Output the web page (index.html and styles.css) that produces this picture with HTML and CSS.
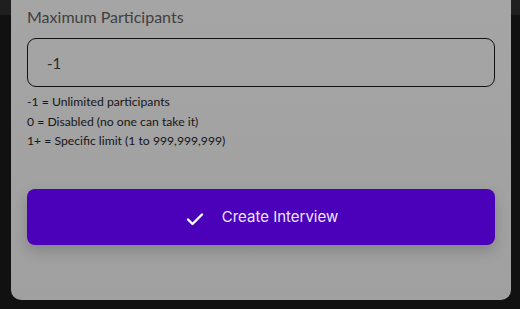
FILE: index.html
```html
<!DOCTYPE html>
<html lang="en">
<head>
  <meta charset="UTF-8" />
  <meta name="viewport" content="width=device-width, initial-scale=1.0" />
  <title>Create Interview</title>
  <link rel="stylesheet" href="styles.css">
</head>
<body>

  <div class="modal">
    <!-- Participants limit -->
    <div class="field">
      <label for="maxParticipants">Maximum Participants</label>
      <input type="text" id="maxParticipants" value="-1">
      <div class="hint">
        <p>-1 = Unlimited participants</p>
        <p>0 = Disabled (no one can take it)</p>
        <p>1+ = Specific limit (1 to 999,999,999)</p>
      </div>
    </div>

    <button type="submit" class="btn-create">
      <svg width="18" height="14" viewBox="0 0 18 14">
        <path d="M2 7.5 L6.5 12 L16 2.5" fill="none" stroke="#fff" stroke-width="2.4" stroke-linecap="round" stroke-linejoin="round"/>
      </svg>
      <span>Create Interview</span>
    </button>
  </div>

</body>
</html>
```

FILE: styles.css
```css
* {
  box-sizing: border-box;
}

body {
  margin: 0;
  padding: 0 9px 0 11px;
  height: 309px;
  overflow: hidden;
  font-family: 'Lato', sans-serif;
  background: linear-gradient(to bottom, #1f1f1f 0, #1f1f1f 15px, #111 15px);
}

.modal {
  background: linear-gradient(to bottom, #a5a5a5, #a0a0a0);
  border-radius: 0 0 10px 10px;
  padding: 6px 16px 55px;
}

.field label {
  display: block;
  font-size: 16px;
  line-height: 22px;
  color: #404040;
  margin-bottom: 10px;
}

.field input {
  width: 100%;
  height: 49px;
  padding: 0 19px;
  border: 1px solid #121212;
  border-radius: 9px;
  background: transparent;
  font-family: inherit;
  font-size: 15px;
  color: #2a2a2a;
  outline: none;
}

.hint {
  margin-top: 5px;
}

.hint p {
  margin: 0;
  font-size: 12.2px;
  line-height: 19.5px;
  color: #161616;
}

.btn-create {
  display: flex;
  align-items: center;
  justify-content: center;
  gap: 18px;
  width: 100%;
  height: 56px;
  margin-top: 38px;
  padding-left: 8px;
  border: none;
  border-radius: 8px;
  background-color: #4b00b9;
  color: #ece6ff;
  font-family: 'Inter', sans-serif;
  font-size: 15px;
  box-shadow: 0 6px 14px rgba(0, 0, 0, 0.18);
  cursor: pointer;
}

.btn-create svg {
  margin-top: 4px;
}
```
